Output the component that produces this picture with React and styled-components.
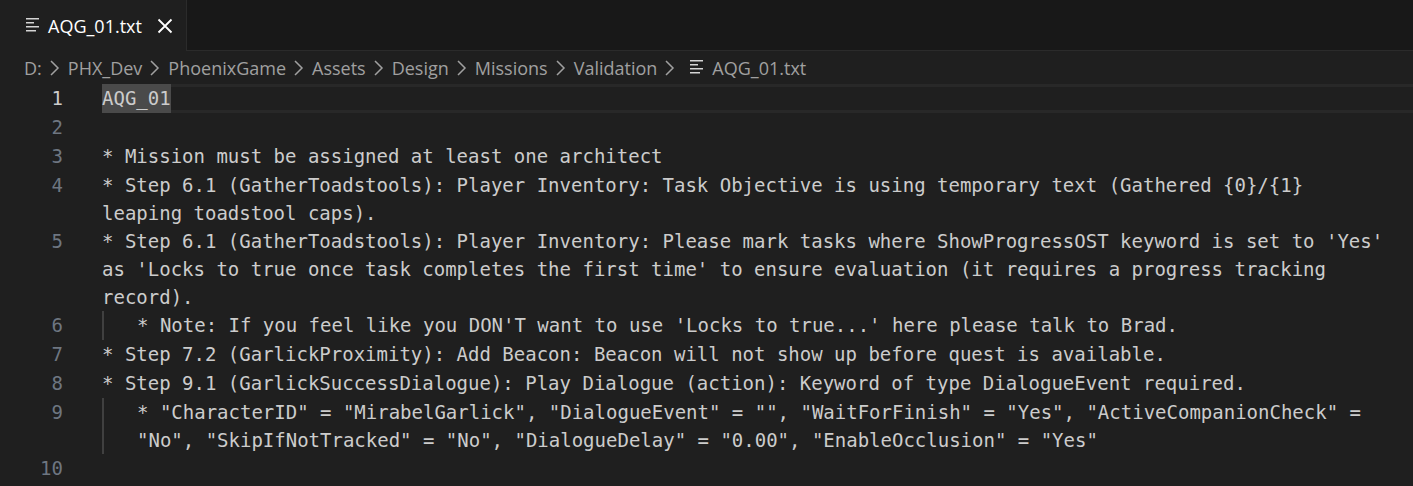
import React from 'react';
import styled, { createGlobalStyle } from 'styled-components';

const GlobalStyle = createGlobalStyle`
  * {
    box-sizing: border-box;
  }

  body {
    margin: 0;
    background-color: #1f1f1f;
  }
`

const Editor = styled.main`
  min-height: 100vh;
  background-color: #1f1f1f;
  color: #cccccc;
  font-family: "Open Sans", "Noto Sans", sans-serif;
  font-size: 18px;
  line-height: 24px;
`

const TabBar = styled.header`
  display: flex;
  height: 51px;
  background-color: #181818;
`

const Tab = styled.div`
  display: flex;
  align-items: center;
  gap: 8px;
  padding: 0 13px 0 24px;
  background-color: #1f1f1f;
  border-right: 1px solid #2b2b2b;
  color: #ffffff;
`

const TabFill = styled.div`
  flex: 1;
  border-bottom: 1px solid #2b2b2b;
`

const CloseButton = styled.button`
  display: flex;
  margin-left: 7px;
  padding: 0;
  border: none;
  background: none;
  color: #ffffff;
  cursor: pointer;
`

const Breadcrumbs = styled.nav`
  display: flex;
  align-items: center;
  gap: 8px;
  height: 33px;
  padding: 0 24px;
  color: #a0a0a0;
`

const Crumb = styled.a`
  color: inherit;
  text-decoration: none;
  white-space: nowrap;
`

const FileCrumb = styled(Crumb)`
  display: flex;
  align-items: center;
  gap: 8px;
  margin-left: 5px;
`

const Lines = styled.ol`
  margin: 0;
  padding: 0;
  list-style: none;
  font-family: "DejaVu Sans Mono", "Liberation Mono", monospace;
  font-size: 19px;
  line-height: 28px;
`

const Line = styled.li`
  display: grid;
  grid-template-columns: 63px 1fr;
  column-gap: 39px;
  min-height: 29px;
`

const LineNumber = styled.span`
  text-align: right;
  color: ${props => props.$active ? '#cccccc' : '#6e7681'};
`

const LineText = styled.div`
  padding-right: 24px;
  padding-left: ${props => props.$indent ? '33px' : '0'};
  border-left: ${props => props.$indent ? '2px solid #404040' : 'none'};
  box-shadow: ${props => props.$active ? 'inset 0 3px #282828, inset 0 -3px #282828' : 'none'};
`

const Selected = styled.mark`
  display: inline-block;
  height: 29px;
  background-color: #4a4a4a;
  color: inherit;
`

const path = ['D:', 'PHX_Dev', 'PhoenixGame', 'Assets', 'Design', 'Missions', 'Validation'];

const lines = [
  { text: 'AQG_01', active: true },
  { text: '' },
  { text: '* Mission must be assigned at least one architect' },
  { text: '* Step 6.1 (GatherToadstools): Player Inventory: Task Objective is using temporary text (Gathered {0}/{1} leaping toadstool caps).' },
  { text: "* Step 6.1 (GatherToadstools): Player Inventory: Please mark tasks where ShowProgressOST keyword is set to 'Yes' as 'Locks to true once task completes the first time' to ensure evaluation (it requires a progress tracking record)." },
  { text: "* Note: If you feel like you DON'T want to use 'Locks to true...' here please talk to Brad.", indent: true },
  { text: '* Step 7.2 (GarlickProximity): Add Beacon: Beacon will not show up before quest is available.' },
  { text: '* Step 9.1 (GarlickSuccessDialogue): Play Dialogue (action): Keyword of type DialogueEvent required.' },
  { text: '* "CharacterID" = "MirabelGarlick", "DialogueEvent" = "", "WaitForFinish" = "Yes", "ActiveCompanionCheck" = "No", "SkipIfNotTracked" = "No", "DialogueDelay" = "0.00", "EnableOcclusion" = "Yes"', indent: true },
  { text: '' },
];

function FileIcon() {
  return (
    <svg width="16" height="17" viewBox="0 0 16 17" fill="#d4d4d4" aria-hidden="true">
      <path d="M2 1h13v1.6H2zM2 5h8v1.6H2zM2 9h13v1.6H2zM2 13h10v1.6H2z" />
    </svg>
  );
}

function Chevron() {
  return (
    <svg width="10" height="16" viewBox="0 0 10 16" fill="none" stroke="currentColor" strokeWidth="1.5" aria-hidden="true">
      <path d="M1 1l7 7-7 7" />
    </svg>
  );
}

function CloseIcon() {
  return (
    <svg width="16" height="16" viewBox="0 0 16 16" fill="none" stroke="currentColor" strokeWidth="1.8" aria-hidden="true">
      <path d="M1.5 1.5l13 13M14.5 1.5l-13 13" />
    </svg>
  );
}

function App() {
  return (
    <Editor>
      <GlobalStyle />
      <TabBar>
        <Tab>
          <FileIcon />
          <span>AQG_01.txt</span>
          <CloseButton type="button" aria-label="Close">
            <CloseIcon />
          </CloseButton>
        </Tab>
        <TabFill />
      </TabBar>
      <Breadcrumbs aria-label="File path">
        {path.map(name => (
          <React.Fragment key={name}>
            <Crumb href="#">{name}</Crumb>
            <Chevron />
          </React.Fragment>
        ))}
        <FileCrumb href="#">
          <FileIcon />
          AQG_01.txt
        </FileCrumb>
      </Breadcrumbs>
      <Lines>
        {lines.map((line, i) => (
          <Line key={i}>
            <LineNumber $active={line.active}>{i + 1}</LineNumber>
            <LineText $active={line.active} $indent={line.indent}>
              {line.active ? <Selected>{line.text}</Selected> : line.text}
            </LineText>
          </Line>
        ))}
      </Lines>
    </Editor>
  );
}

export default App;
